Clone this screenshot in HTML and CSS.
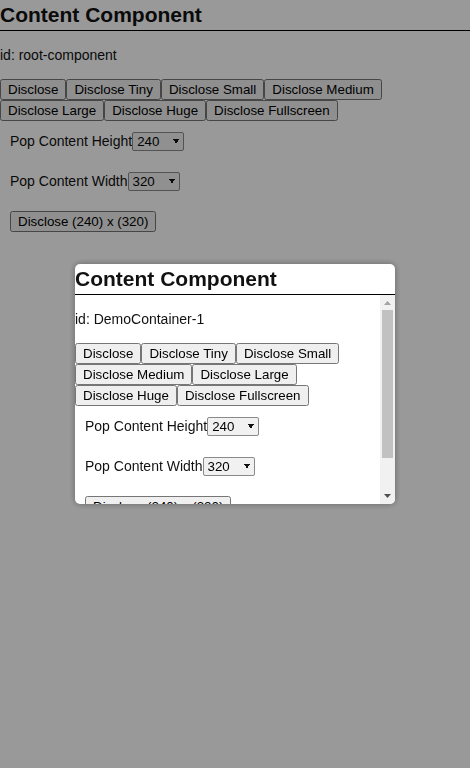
FILE: index.html
```html
<!DOCTYPE html>
<html>
<head>
<meta charset="utf-8">
<link rel="stylesheet" href="styles.css">
</head>
<body>
<div class="component">
  <h1 class="title">Content Component</h1>
  <div class="ident">id: root-component</div>
  <div class="buttons"><button>Disclose</button><button>Disclose Tiny</button><button>Disclose Small</button><button>Disclose Medium</button><button>Disclose Large</button><button>Disclose Huge</button><button>Disclose Fullscreen</button></div>
  <div class="row">Pop Content Height<select><option>240</option></select></div>
  <div class="row">Pop Content Width<select><option>320</option></select></div>
  <div class="row"><button>Disclose (240) x (320)</button></div>
</div>
<div class="overlay"></div>
<div class="modal">
  <h1 class="title">Content Component</h1>
  <div class="modal-body">
    <div class="modal-content">
      <div class="ident">id: DemoContainer-1</div>
      <div class="buttons"><button>Disclose</button><button>Disclose Tiny</button><button>Disclose Small</button><button>Disclose Medium</button><button>Disclose Large</button><button>Disclose Huge</button><button>Disclose Fullscreen</button></div>
      <div class="row">Pop Content Height<select><option>240</option></select></div>
      <div class="row">Pop Content Width<select><option>320</option></select></div>
      <div class="row"><button>Disclose (240) x (320)</button></div>
    </div>
    <div class="scrollbar">
      <svg class="sb-btn" width="15" height="15" viewBox="0 0 15 15"><polygon points="4,10 11,10 7.5,6" fill="#a3a3a3"/></svg>
      <div class="sb-track"><div class="sb-thumb"></div></div>
      <svg class="sb-btn" width="15" height="15" viewBox="0 0 15 15"><polygon points="4,5 11,5 7.5,9" fill="#505050"/></svg>
    </div>
  </div>
</div>
</body>
</html>
```
FILE: styles.css
```css
html, body {
  margin: 0;
  padding: 0;
  background: #fff;
  height: 100%;
}
body {
  font-family: "Liberation Sans", Arial, sans-serif;
  font-size: 14px;
  color: #111;
}
.title {
  margin: 0;
  font-size: 21px;
  font-weight: bold;
  height: 30px;
  line-height: 30px;
  border-bottom: 1px solid #000;
}
.ident {
  margin: 16px 0;
  line-height: 16px;
}
.buttons button,
.row button {
  font-family: "Liberation Sans", Arial, sans-serif;
  font-size: 13.333px;
}
.row {
  padding: 10px;
  line-height: 20px;
}
select {
  appearance: none;
  -webkit-appearance: none;
  box-sizing: border-box;
  width: 52px;
  height: 19px;
  margin: 0;
  padding: 0 0 0 4px;
  font-family: "Liberation Sans", Arial, sans-serif;
  font-size: 13.333px;
  color: #000;
  border: 1px solid #8a8a8a;
  border-radius: 2px;
  background-color: #f1f1f1;
  background-image:
    linear-gradient(to bottom left, #111 50%, transparent 50%),
    linear-gradient(to bottom right, #111 50%, transparent 50%);
  background-size: 3px 5px, 3px 5px;
  background-position: 40px 6px, 43px 6px;
  background-repeat: no-repeat;
}
.overlay {
  position: fixed;
  inset: 0;
  background: rgba(0, 0, 0, 0.4);
}
.modal {
  position: fixed;
  left: 75px;
  top: 264px;
  width: 320px;
  height: 240px;
  background: #fff;
  border-radius: 5px;
  box-shadow: 0 0 6px rgba(0, 0, 0, 0.35);
  display: flex;
  flex-direction: column;
  overflow: hidden;
}
.modal-body {
  flex: 1;
  min-height: 0;
  display: flex;
}
.modal-content {
  flex: 1;
  min-width: 0;
  overflow: hidden;
}
.scrollbar {
  width: 15px;
  flex: 0 0 15px;
  display: flex;
  flex-direction: column;
  background: #f1f1f1;
}
.sb-btn {
  display: block;
  flex: 0 0 15px;
}
.sb-track {
  flex: 1;
  padding: 0 2px;
}
.sb-thumb {
  height: 148px;
  background: #c1c1c1;
}
```
